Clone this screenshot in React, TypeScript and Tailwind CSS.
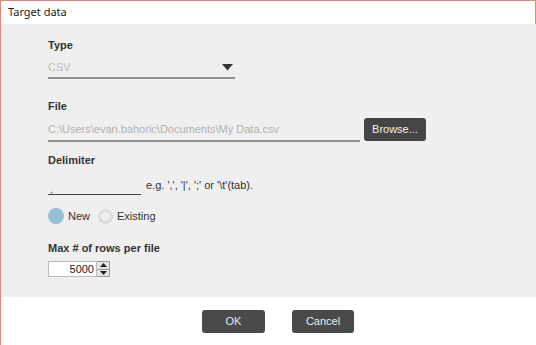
export default function App() {
  return (
    <div className="w-[536px] h-[345px] flex flex-col bg-white text-[11px] font-['Liberation_Sans',Arial,sans-serif] text-[#333] overflow-hidden">
      {/* title bar */}
      <div className="h-[24px] shrink-0 flex items-center pl-[7px] border-t border-l border-r border-[#d98c7e] bg-white text-[#222] font-['Noto_Sans',sans-serif] text-[11px]">
        Target data
      </div>

      {/* body */}
      <div className="h-[273px] shrink-0 bg-[#efefef] border-l border-[#d98c7e] pl-[47px] pt-[14px] flex flex-col">
        <div className="h-[14px] leading-[14px] font-bold">Type</div>
        <div className="mt-[7px] w-[187px] h-[20px] flex items-center justify-between border-b-2 border-[#8f8f8f] pb-[2px]">
          <span className="text-[#bdbdbd]">CSV</span>
          <svg width="11" height="7" viewBox="0 0 11 7" className="mr-[2px]">
            <path d="M0 0 L11 0 L5.5 6.5 Z" fill="#333" />
          </svg>
        </div>

        <div className="mt-[20px] h-[14px] leading-[14px] font-bold">File</div>
        <div className="mt-[5px] h-[24px] flex items-end">
          <div className="w-[312px] h-[24px] border-b-2 border-[#8f8f8f] flex items-end pb-[3px] text-[#b0b0b0] whitespace-nowrap">
            C:\Users\evan.bahoric\Documents\My Data.csv
          </div>
          <button className="ml-[4px] mb-[1px] w-[62px] h-[23px] rounded-[3px] bg-[#454545] text-[#f0f0f0] text-[11px] flex items-center justify-center">
            Browse...
          </button>
        </div>

        <div className="mt-[11px] h-[14px] leading-[14px] font-bold">Delimiter</div>
        <div className="mt-[8px] h-[20px] flex items-end">
          <div className="w-[93px] h-[20px] border-b border-[#444] flex items-end pl-[2px] text-[#555] leading-[10px]">,</div>
          <span className="ml-[5px] mb-[2px] text-[#333]">e.g. ',', '|', ';' or '\t'(tab).</span>
        </div>

        <div className="mt-[13px] h-[16px] flex items-center">
          <span className="w-[16px] h-[16px] rounded-full bg-[#94c0d6]" />
          <span className="ml-[4px] text-[#333]">New</span>
          <span className="ml-[8px] w-[15px] h-[15px] rounded-full border-[3px] border-[#dcdcdc]" />
          <span className="ml-[4px] text-[#333]">Existing</span>
        </div>

        <div className="mt-[17px] h-[14px] leading-[14px] font-bold">Max # of rows per file</div>
        <div className="mt-[6px] flex items-center h-[16px]">
          <div className="w-[49px] h-[16px] bg-white border border-[#bcbcbc] flex items-center justify-end pr-[2px] text-[#222]">
            5000
          </div>
          <div className="w-[13px] h-[16px] border border-l-0 border-[#9a9a9a] bg-[#e6e6e6] flex flex-col">
            <div className="flex-1 flex items-center justify-center border-b border-[#9a9a9a]">
              <svg width="7" height="4" viewBox="0 0 7 4"><path d="M0 4 L7 4 L3.5 0 Z" fill="#222" /></svg>
            </div>
            <div className="flex-1 flex items-center justify-center">
              <svg width="7" height="4" viewBox="0 0 7 4"><path d="M0 0 L7 0 L3.5 4 Z" fill="#222" /></svg>
            </div>
          </div>
        </div>
      </div>

      {/* footer */}
      <div className="flex-1 bg-white border-l border-[#d98c7e] flex pt-[13px] gap-[27px] pl-[201px]">
        <button className="w-[63px] h-[23px] rounded-[3px] bg-[#4a4a4a] text-[#e8e8e8] text-[11px]">OK</button>
        <button className="w-[62px] h-[23px] rounded-[3px] bg-[#4a4a4a] text-[#e8e8e8] text-[11px]">Cancel</button>
      </div>
    </div>
  );
}
